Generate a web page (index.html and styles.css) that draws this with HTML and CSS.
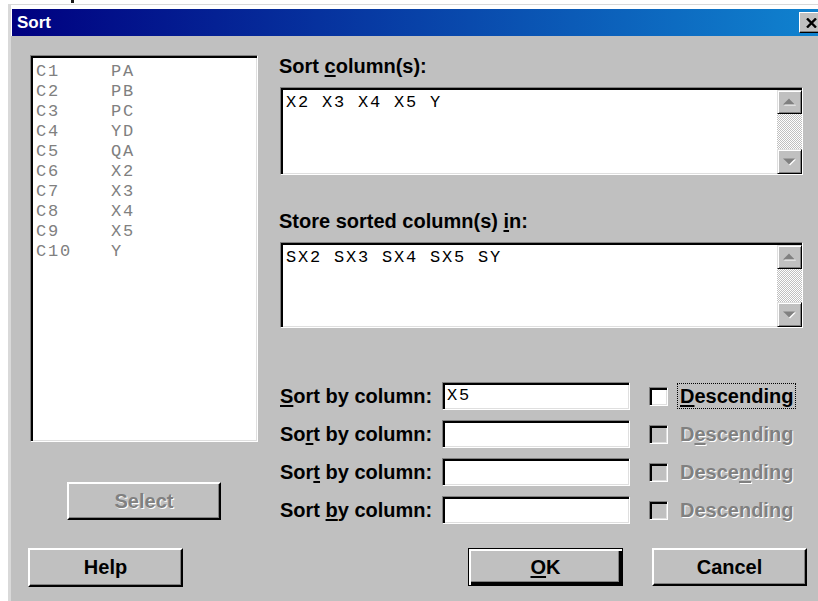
FILE: index.html
```html
<!DOCTYPE html>
<html>
<head>
<meta charset="utf-8">
<title>Sort</title>
<link rel="stylesheet" href="styles.css">
</head>
<body>
<div class="top-strip"><span class="tick"></span></div>
<div class="window">
  <div class="titlebar">
    <span class="title">Sort</span>
    <div class="close-btn">
      <svg width="11" height="10" viewBox="0 0 11 10"><path d="M1 0.5 L10 9.5 M10 0.5 L1 9.5" stroke="#000" stroke-width="2.4" fill="none"/></svg>
    </div>
  </div>
  <div class="dialog">
    <div class="left-col">
      <div class="listbox sunken">
        <div class="list-row"><span>C1</span><span>PA</span></div>
        <div class="list-row"><span>C2</span><span>PB</span></div>
        <div class="list-row"><span>C3</span><span>PC</span></div>
        <div class="list-row"><span>C4</span><span>YD</span></div>
        <div class="list-row"><span>C5</span><span>QA</span></div>
        <div class="list-row"><span>C6</span><span>X2</span></div>
        <div class="list-row"><span>C7</span><span>X3</span></div>
        <div class="list-row"><span>C8</span><span>X4</span></div>
        <div class="list-row"><span>C9</span><span>X5</span></div>
        <div class="list-row"><span>C10</span><span>Y</span></div>
      </div>
      <div class="btn btn-select disabled">Select</div>
      <div class="btn btn-help">Help</div>
    </div>

    <div class="right-col">
      <div class="label">Sort <u>c</u>olumn(s):</div>
      <div class="field sunken field-sort">
        <div class="field-text">X2 X3 X4 X5 Y</div>
        <div class="vscroll">
          <div class="sb-btn"><svg width="13" height="8" viewBox="0 0 13 8"><polygon points="7,1.5 13,7.5 1,7.5" fill="#fff"/><polygon points="6,0.5 12,6.5 0,6.5" fill="#808080"/></svg></div>
          <div class="sb-track"></div>
          <div class="sb-btn sb-down"><svg width="13" height="8" viewBox="0 0 13 8"><polygon points="1,1.5 13,1.5 7,7.5" fill="#fff"/><polygon points="0,0.5 12,0.5 6,6.5" fill="#808080"/></svg></div>
        </div>
      </div>

      <div class="label label-store">Store sorted column(s) <u>i</u>n:</div>
      <div class="field sunken field-store">
        <div class="field-text">SX2 SX3 SX4 SX5 SY</div>
        <div class="vscroll">
          <div class="sb-btn"><svg width="13" height="8" viewBox="0 0 13 8"><polygon points="7,1.5 13,7.5 1,7.5" fill="#fff"/><polygon points="6,0.5 12,6.5 0,6.5" fill="#808080"/></svg></div>
          <div class="sb-track"></div>
          <div class="sb-btn sb-down"><svg width="13" height="8" viewBox="0 0 13 8"><polygon points="1,1.5 13,1.5 7,7.5" fill="#fff"/><polygon points="0,0.5 12,0.5 6,6.5" fill="#808080"/></svg></div>
        </div>
      </div>

      <div class="sort-rows">
        <div class="sort-row">
          <span class="sort-label"><u>S</u>ort by column:</span>
          <div class="sort-input sunken">X5</div>
          <span class="check sunken"></span>
          <span class="check-label focused"><u>D</u>escending</span>
        </div>
        <div class="sort-row">
          <span class="sort-label">So<u>r</u>t by column:</span>
          <div class="sort-input sunken"></div>
          <span class="check sunken off"></span>
          <span class="check-label disabled">D<u>e</u>scending</span>
        </div>
        <div class="sort-row">
          <span class="sort-label">Sor<u>t</u> by column:</span>
          <div class="sort-input sunken"></div>
          <span class="check sunken off"></span>
          <span class="check-label disabled">Desce<u>n</u>ding</span>
        </div>
        <div class="sort-row">
          <span class="sort-label">Sort <u>b</u>y column:</span>
          <div class="sort-input sunken"></div>
          <span class="check sunken off"></span>
          <span class="check-label disabled">Descending</span>
        </div>
      </div>

      <div class="actions">
        <div class="btn btn-default"><span><u>O</u>K</span></div>
        <div class="btn">Cancel</div>
      </div>
    </div>
  </div>
</div>
</body>
</html>
```

FILE: styles.css
```css
html, body {
  margin: 0;
  padding: 0;
}

body {
  width: 818px;
  height: 601px;
  overflow: hidden;
  background: #fff;
  font-family: "Liberation Sans", Arial, sans-serif;
  color: #000;
}

.top-strip {
  height: 4px;
}

.tick {
  display: block;
  width: 3px;
  height: 3px;
  margin-left: 71px;
  background: #1a1a1a;
}

/* window frame */
.window {
  margin-left: 8px;
  width: 816px;
  border-top: 1px solid #d9d9d9;
  border-left: 3px solid #d9d9d9;
  padding-top: 4px;
  background: #fff;
}

.titlebar {
  height: 27px;
  margin-left: 1px;
  display: flex;
  align-items: center;
  justify-content: space-between;
  background: linear-gradient(to right, #000080, #1084d0);
}

.title {
  color: #fff;
  font-weight: bold;
  font-size: 17px;
  line-height: 27px;
  padding-left: 5px;
}

.close-btn {
  width: 24px;
  height: 21px;
  box-sizing: border-box;
  margin-right: 4px;
  background: #c0c0c0;
  border: 1px solid;
  border-color: #fff #000 #000 #fff;
  box-shadow: inset -1px -1px #808080;
  display: flex;
  align-items: center;
  justify-content: center;
}

/* dialog body */
.dialog {
  background: #c0c0c0;
  display: flex;
  padding: 18px 0 0 17px;
  height: 570px;
  box-sizing: border-box;
}

.sunken {
  box-sizing: border-box;
  background: #fff;
  border: 1px solid;
  border-color: #808080 #fff #fff #808080;
  box-shadow: inset 2px 2px #000, inset -1px -1px #dfdfdf;
}

.mono {
  font-family: "Liberation Mono", "Courier New", monospace;
}

.left-col {
  width: 230px;
  display: flex;
  flex-direction: column;
  flex: none;
}

.listbox {
  margin: 1px 0 0 2px;
  width: 228px;
  height: 387px;
  padding: 6px 0 0 5px;
}

.list-row {
  display: grid;
  grid-template-columns: 75px auto;
  font-family: "Liberation Mono", "Courier New", monospace;
  font-size: 17px;
  letter-spacing: 1.8px;
  line-height: 20px;
  color: #808080;
}

/* push buttons */
.btn {
  box-sizing: border-box;
  width: 155px;
  height: 38px;
  background: #c0c0c0;
  border: 2px solid;
  border-color: #fff #000 #000 #fff;
  box-shadow: inset -1px -1px #808080;
  display: flex;
  align-items: center;
  justify-content: center;
  font-weight: bold;
  font-size: 20px;
}

.btn-default {
  border: 1px solid #000;
  box-shadow: inset 2px 2px #fff, inset -3px -3px #000, inset -4px -4px #808080;
}

.btn-select {
  width: 154px;
  margin: 40px 0 0 39px;
}

.btn-help {
  margin-top: 28px;
  height: 39px;
}

.disabled {
  color: #808080;
  text-shadow: 1px 1px 0 #fff;
}

u {
  text-decoration-thickness: 2px;
  text-underline-offset: 2px;
}

/* right side */
.right-col {
  margin-left: 21px;
  width: 528px;
  flex: none;
}

.label {
  font-weight: bold;
  font-size: 20px;
  line-height: 24px;
}

.label-store {
  margin-top: 34px;
}

.field {
  margin-left: 1px;
  width: 523px;
  display: flex;
}

.field-sort {
  margin-top: 9px;
  height: 88px;
}

.field-store {
  margin-top: 9px;
  height: 86px;
}

.field-text {
  flex: 1;
  padding: 5px 0 0 5px;
  font-family: "Liberation Mono", "Courier New", monospace;
  font-size: 17px;
  letter-spacing: 1.8px;
  line-height: 20px;
  white-space: pre;
}

.vscroll {
  width: 25px;
  margin-top: 2px;
  display: flex;
  flex-direction: column;
  flex: none;
}

.sb-btn {
  height: 24px;
  box-sizing: border-box;
  background: #c0c0c0;
  border: 1px solid;
  border-color: #dfdfdf #000 #000 #dfdfdf;
  box-shadow: inset 1px 1px #fff, inset -1px -1px #808080;
  display: flex;
  align-items: center;
  justify-content: center;
  flex: none;
}

.sb-down {
  height: 25px;
}

.sb-track {
  flex: 1;
  background: repeating-conic-gradient(#c0c0c0 0 25%, #fff 0 50%) 0 0 / 2px 2px;
}

.sort-rows {
  margin-top: 54px;
  display: flex;
  flex-direction: column;
  gap: 10px;
}

.sort-row {
  display: flex;
  align-items: center;
  height: 28px;
  margin-left: 1px;
  font-weight: bold;
  font-size: 20px;
}

.sort-label {
  width: 162px;
  flex: none;
}

.sort-input {
  width: 188px;
  height: 28px;
  flex: none;
  padding: 1px 0 0 4px;
  font-family: "Liberation Mono", "Courier New", monospace;
  font-weight: normal;
  font-size: 17px;
  letter-spacing: 1.8px;
  line-height: 24px;
}

.check {
  width: 19px;
  height: 19px;
  margin-left: 19px;
  flex: none;
}

.check.off {
  background: #c0c0c0;
}

.check-label {
  margin-left: 9px;
  padding: 0 2px;
  line-height: 24px;
  border: 1px dotted transparent;
}

.check-label.focused {
  border-color: #000;
}

.actions {
  margin-top: 24px;
  display: flex;
  justify-content: flex-end;
  gap: 29px;
}
```
